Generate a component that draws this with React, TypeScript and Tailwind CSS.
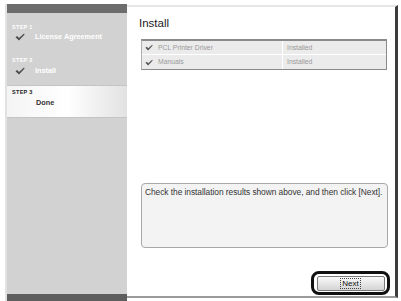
import React from "react";

const Check = ({ className = "" }: { className?: string }) => (
  <svg viewBox="0 0 10 8" className={className}>
    <path d="M0.5 4.2 L2.2 3 L4 5 L9 0.6 L9.6 1.4 L4 7.6 Z" fill="currentColor" />
  </svg>
);

export default function App() {
  return (
    <div
      className="w-[401px] h-[301px] bg-white overflow-hidden flex pt-[4px] pl-[5px]"
      style={{ fontFamily: '"Liberation Sans", Arial, sans-serif' }}
    >
      {/* Sidebar */}
      <div className="w-[122px] h-[297px] flex flex-col bg-[#d2d2d2] border-l-[2px] border-[#e2e2e2]">
        <div className="h-[9px] bg-[#6d6d6d]" />
        <div className="flex flex-col flex-1">
          <div className="pt-[11px] pl-[5px] h-[34px]">
            <div className="text-[5.5px] font-bold text-white leading-[6px] tracking-[0.3px]">STEP 1</div>
            <div className="flex items-center mt-[2px] pl-[3px]">
              <Check className="w-[10px] h-[8px] text-[#4a4a4a]" />
              <span className="ml-[10px] text-[7.3px] font-bold text-white leading-[9px]">License Agreement</span>
            </div>
          </div>
          <div className="pt-[10px] pl-[5px] h-[38px]">
            <div className="text-[5.5px] font-bold text-white leading-[6px] tracking-[0.3px]">STEP 2</div>
            <div className="flex items-center mt-[3px] pl-[3px]">
              <Check className="w-[10px] h-[8px] text-[#4a4a4a]" />
              <span className="ml-[10px] text-[7.3px] font-bold text-white leading-[9px]">Install</span>
            </div>
          </div>
          <div className="h-[33px] pt-[3px] pl-[5px] bg-gradient-to-r from-[#f4f4f4] via-white to-[#e2e2e2] border-y border-[#c4c4c4]">
            <div className="text-[5.5px] font-bold text-[#222] leading-[6px] tracking-[0.3px]">STEP 3</div>
            <div className="ml-[24px] mt-[3px] text-[7.3px] font-bold text-[#333] leading-[9px]">Done</div>
          </div>
          <div className="flex-1" />
        </div>
        <div className="h-[7px] bg-[#5e5e5e]" />
      </div>

      {/* Content */}
      <div className="w-[271px] h-[293px] mt-[1px] border-t-[2px] border-[#e6e6e6] border-r-[3px] border-r-[#3c3c3c] border-b-[2px] border-b-[#9a9a9a] flex flex-col">
        <div className="pl-[12px] pt-[10px] text-[11.5px] text-[#1a1a1a] leading-[12px]">Install</div>
        <div className="ml-[14px] mr-[8px] mt-[10px] border border-[#8a8a8a] border-t-[2px] border-l-[#b0b0b0] bg-[#ebebeb]">
          {[
            ["PCL Printer Driver", "Installed"],
            ["Manuals", "Installed"],
          ].map(([a, b], i) => (
            <div
              key={a}
              className={`flex items-center h-[14px] ${i === 0 ? "border-b border-white" : ""}`}
            >
              <div className="w-[141px] flex items-center pl-[3px] h-full border-r border-white">
                <Check className="w-[8px] h-[7px] text-[#555]" />
                <span className="ml-[5px] text-[6.8px] text-[#9a9a9a] leading-[8px]">{a}</span>
              </div>
              <span className="ml-[4px] text-[6.8px] text-[#9a9a9a] leading-[8px]">{b}</span>
            </div>
          ))}
        </div>
        <div className="flex-1" />
        <div className="ml-[14px] mr-[7px] h-[65px] rounded-[4px] border border-[#a8a8a8] bg-[#f3f3f3] px-[3px] pt-[4px]">
          <div className="text-[8.4px] text-[#333] leading-[9px] tracking-[-0.05px] whitespace-nowrap">
            Check the installation results shown above, and then click [Next].
          </div>
        </div>
        <div className="h-[23px]" />
        <div className="flex justify-end mr-[5px] mb-[1px]">
          <div className="w-[79px] h-[24px] rounded-[8px] border-[3px] border-[#111] flex items-center justify-center">
            <div className="w-[68px] h-[15px] rounded-[2px] border border-[#7a7a7a] bg-gradient-to-b from-[#fafafa] to-[#d4d4d4] flex items-center justify-center">
              <span className="text-[8px] text-[#111] leading-[9px] outline outline-1 outline-dotted outline-[#444] px-[1px]">Next</span>
            </div>
          </div>
        </div>
      </div>
    </div>
  );
}
